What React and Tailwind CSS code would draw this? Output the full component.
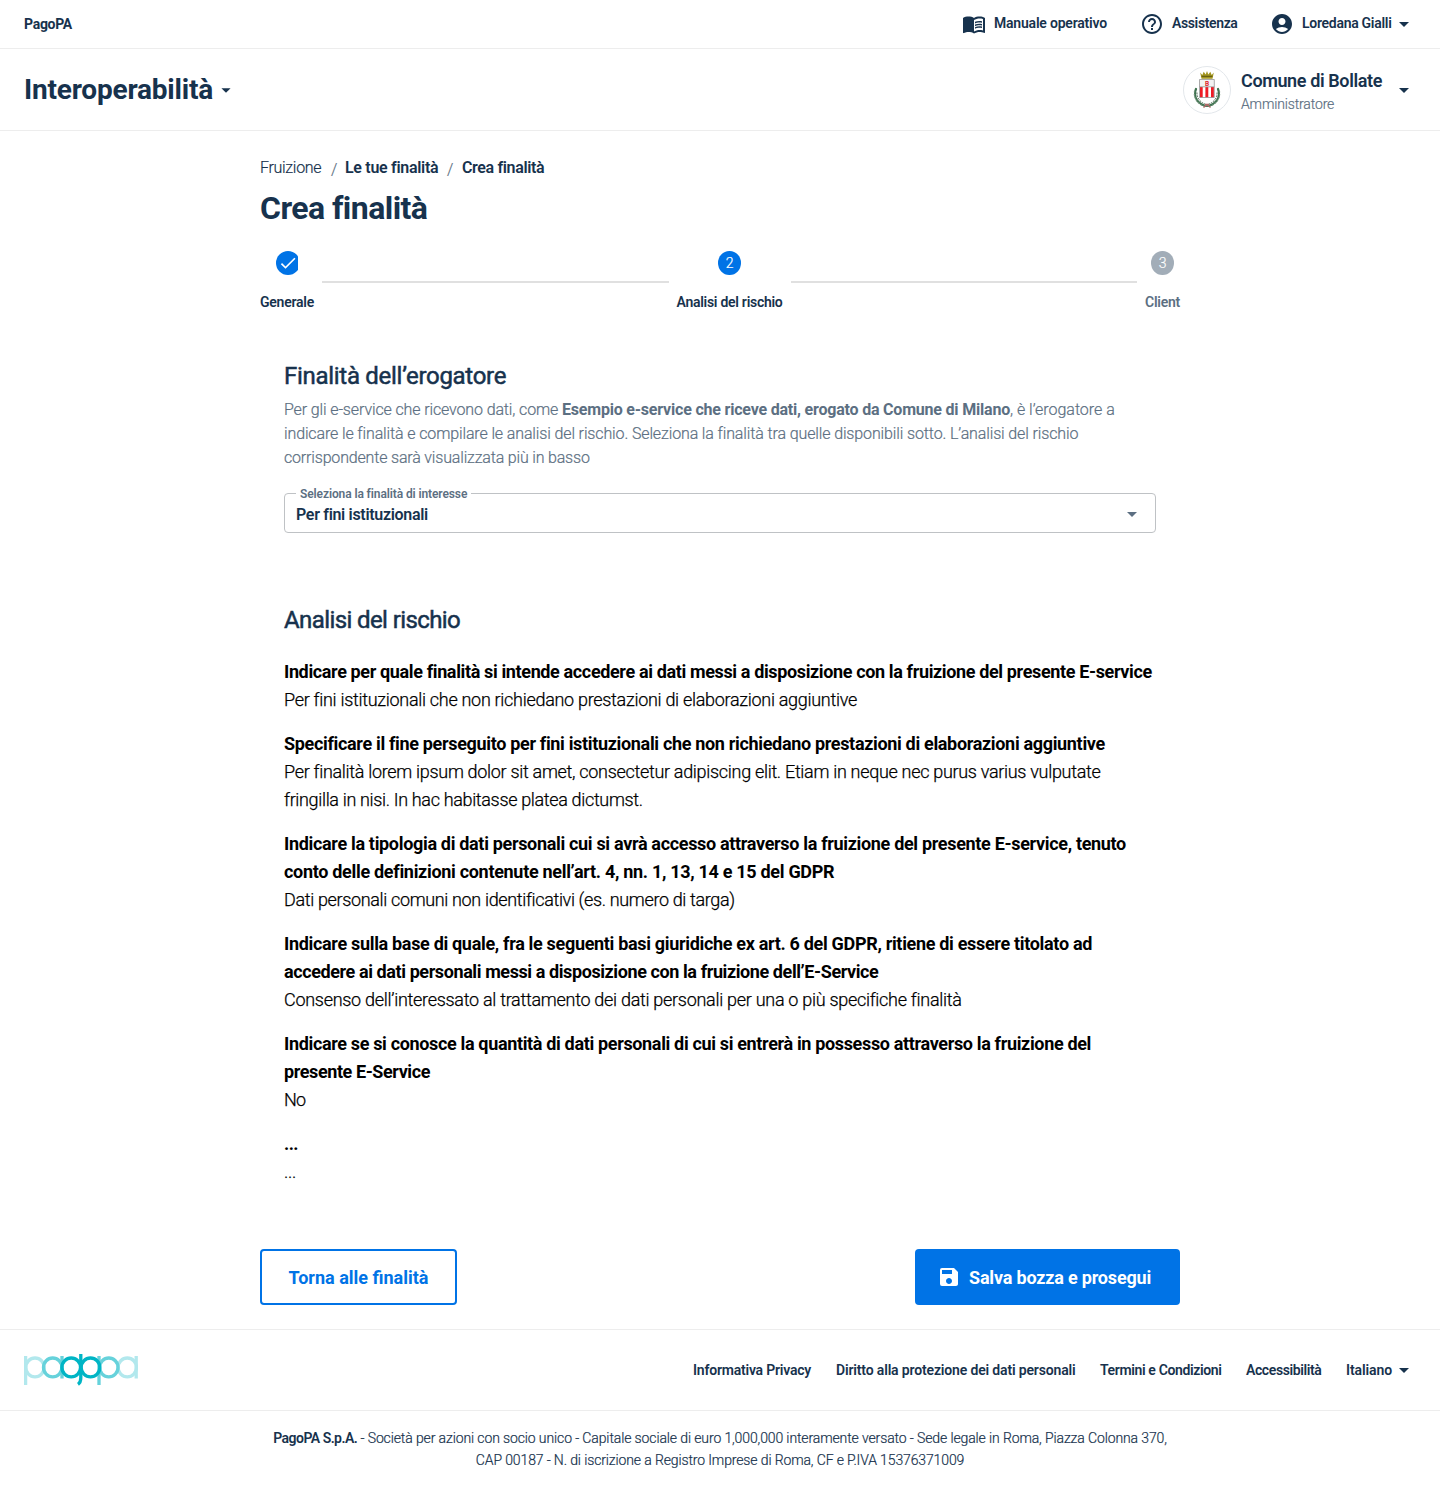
import { MdMenuBook, MdHelpOutline, MdAccountCircle, MdArrowDropDown, MdSave, MdCheck } from "react-icons/md";

const risk = [
  {
    q: [["Indicare per quale finalità si intende accedere ai dati messi a disposizione con la fruizione del presente E-service", "tracking-[-0.0203em]"]],
    a: [["Per fini istituzionali che non richiedano prestazioni di elaborazioni aggiuntive", "tracking-[-0.0165em]"]],
  },
  {
    q: [["Specificare il fine perseguito per fini istituzionali che non richiedano prestazioni di elaborazioni aggiuntive", "tracking-[-0.0183em]"]],
    a: [
      ["Per finalità lorem ipsum dolor sit amet, consectetur adipiscing elit. Etiam in neque nec purus varius vulputate", "tracking-[-0.017em]"],
      ["fringilla in nisi. In hac habitasse platea dictumst.", "tracking-[-0.019em]"],
    ],
  },
  {
    q: [
      ["Indicare la tipologia di dati personali cui si avrà accesso attraverso la fruizione del presente E-service, tenuto", "tracking-[-0.018em]"],
      ["conto delle definizioni contenute nell’art. 4, nn. 1, 13, 14 e 15 del GDPR", "tracking-[-0.017em]"],
    ],
    a: [["Dati personali comuni non identificativi (es. numero di targa)", "tracking-[-0.0195em]"]],
  },
  {
    q: [
      ["Indicare sulla base di quale, fra le seguenti basi giuridiche ex art. 6 del GDPR, ritiene di essere titolato ad", "tracking-[-0.0178em]"],
      ["accedere ai dati personali messi a disposizione con la fruizione dell’E-Service", "tracking-[-0.0226em]"],
    ],
    a: [["Consenso dell’interessato al trattamento dei dati personali per una o più specifiche finalità", "tracking-[-0.016em]"]],
  },
  {
    q: [
      ["Indicare se si conosce la quantità di dati personali di cui si entrerà in possesso attraverso la fruizione del", "tracking-[-0.0191em]"],
      ["presente E-Service", "tracking-[-0.0227em]"],
    ],
    a: [["No", "tracking-[-0.04em]"]],
  },
  { q: [["...", "tracking-[-0.03em]"]], a: [["...", "tracking-[-0.02em]"]] },
];

function Lines({ items }) {
  return items.map(([text, tracking]) => (
    <span key={text} className={`block whitespace-nowrap ${tracking}`}>{text}</span>
  ));
}

function Crest() {
  return (
    <svg viewBox="0 0 48 48" className="size-12" aria-hidden="true">
      <circle cx="24" cy="24" r="23.5" fill="#fff" stroke="#e3e7eb" />
      <g fill="none" strokeLinecap="round">
        <path d="M13 23c-3 8 2 15 10 17M35 23c3 8-2 15-10 17" stroke="#3f7350" strokeWidth="2.2" strokeDasharray="1.6 1.5" />
        <path d="M11.6 25c-1.5 7 3.5 14 11 15.5M36.4 25c1.5 7-3.5 14-11 15.5" stroke="#6f8f78" strokeWidth="1.2" strokeDasharray="1 2.2" />
        <path d="M14 27c0 5 3 9 8 11M34 27c0 5-3 9-8 11" stroke="#4a6350" strokeWidth="1" strokeDasharray="1 1.8" />
      </g>
      <path d="M20.5 41.5l3.5-3 3.5 3M22 38.5h4" fill="none" stroke="#b06a68" strokeWidth="1.4" />
      <path d="M17.2 6.5l2.1 2.4 1.4-3.1 2 2.6L24 5l1.3 3.4 2-2.6 1.4 3.1 2.1-2.4-1.3 6.2h-11z" fill="#a2951e" />
      <path d="M18.6 10.3h10.8" stroke="#59520f" strokeWidth="1" />
      <path d="M16.5 13.5h14.8v18H16.5z" fill="#f2f2f2" />
      <path d="M16.5 21h14.8v10.4H16.5z" fill="#fff" />
      <path d="M17 21h2.7v10.4H17zM22.4 21h2.9v10.4h-2.9zM28 21h2.9v10.4H28z" fill="#ee1c25" />
      <path d="M16.5 13.5h14.8v18H16.5zM16.5 20.8h14.8" fill="none" stroke="#969696" strokeWidth=".8" />
      <text x="24" y="19.7" textAnchor="middle" fill="#e0252c" className="font-[Roboto] text-[6.5px] font-bold">B</text>
    </svg>
  );
}

function PagoLogo() {
  return (
    <svg viewBox="0 0 114 34" className="h-[34px] w-[114px]" fill="none" strokeWidth="3.3" role="img" aria-label="pagopa">
      <g stroke="#b2e8ed">
        <ellipse cx="11" cy="14.4" rx="9.2" ry="9.4" />
        <ellipse cx="103.3" cy="14.4" rx="9.2" ry="9.4" />
        <path d="M1.6 3v29M112.2 3v22.500" />
      </g>
      <g stroke="#66d2db">
        <ellipse cx="28.7" cy="14.4" rx="9.2" ry="9.4" />
        <ellipse cx="84.8" cy="14.4" rx="9.2" ry="9.4" />
        <path d="M38 3v22.5M75 3v29" />
      </g>
      <g stroke="#00b5c5">
        <ellipse cx="47.2" cy="14.4" rx="9.3" ry="9.4" />
        <ellipse cx="66.5" cy="14.400" rx="9.3" ry="9.4" />
        <path d="M56.8 1v24c0 3.5-.8 5-2.8 6.300" />
      </g>
    </svg>
  );
}

function Step({ label, tracking, muted, children }) {
  return (
    <div className="flex flex-col items-center">
      <div className="flex h-6 items-center justify-center">{children}</div>
      <span className={`mt-[18px] text-sm leading-[18px] font-semibold whitespace-nowrap ${tracking} ${muted ? "text-[#5c6f82]" : ""}`}>{label}</span>
    </div>
  );
}

const Connector = () => <div className="mx-2 mt-[30px] h-0.5 flex-1 bg-[#e0e0e0]" />;

export default function App() {
  return (
    <div className="min-h-[1487px] bg-white font-[Roboto,sans-serif] text-[#17324d]">
      <header>
        <div className="flex h-[49px] items-center justify-between border-b border-[#ededed] px-6 text-sm font-semibold">
          <span className="font-bold tracking-[-0.0195em]">PagoPA</span>
          <nav className="flex items-center whitespace-nowrap">
            <a className="flex items-center">
              <MdMenuBook className="size-6" />
              <span className="-mt-0.5 ml-2 w-[114px] tracking-[-0.0143em]">Manuale operativo</span>
            </a>
            <a className="ml-8 flex items-center">
              <MdHelpOutline className="size-6" />
              <span className="-mt-0.5 ml-2 w-[66px] tracking-[-0.0267em]">Assistenza</span>
            </a>
            <a className="ml-8 flex items-center">
              <MdAccountCircle className="size-6" />
              <span className="-mt-0.5 ml-2 w-[90px] tracking-[-0.0203em]">Loredana Gialli</span>
              <MdArrowDropDown className="size-6" />
            </a>
          </nav>
        </div>
        <div className="flex h-[82px] items-center justify-between border-b border-[#ededed] px-6">
          <div className="flex items-center">
            <span className="text-[28px] leading-9 font-bold tracking-[-0.0072em]">Interoperabilità</span>
            <MdArrowDropDown className="ml-0.5 size-[22px]" />
          </div>
          <div className="flex items-center">
            <Crest />
            <div className="mt-1 ml-2.5 w-[151px] whitespace-nowrap">
              <div className="text-lg leading-6 font-semibold tracking-[-0.0212em]">Comune di Bollate</div>
              <div className="text-sm leading-[22px] font-light tracking-[-0.01em] text-[#5c6f82] [-webkit-text-stroke:0.2px]">Amministratore</div>
            </div>
            <MdArrowDropDown className="size-6" />
          </div>
        </div>
      </header>

      <main className="mx-auto h-[1198px] w-[920px] pt-[25px]">
        <nav className="flex h-6 items-center text-base font-semibold whitespace-nowrap">
          <span className="w-[62px] font-light tracking-[-0.019em] [-webkit-text-stroke:0.2px]">Fruizione</span>
          <span className="mt-1 w-[23px] pl-[9px] font-light text-[#5c6f82] [-webkit-text-stroke:0.2px]">/</span>
          <span className="w-[93px] tracking-[-0.0187em]">Le tue finalità</span>
          <span className="mt-1 w-6 pl-[9px] font-light text-[#5c6f82] [-webkit-text-stroke:0.2px]">/</span>
          <span className="tracking-[-0.0222em]">Crea finalità</span>
        </nav>
        <h1 className="mt-2 text-[32px] leading-10 font-bold tracking-[-0.0173em]">Crea finalità</h1>

        <div className="mt-[23px] flex items-start">
          <Step label="Generale" tracking="tracking-[-0.0171em]">
            <div className="w-[22px] overflow-hidden">
              <div className="flex size-6 items-center justify-center rounded-full bg-[#0073e6]">
                <MdCheck className="mr-px mb-px size-5 text-white" />
              </div>
            </div>
          </Step>
          <Connector />
          <Step label="Analisi del rischio" tracking="tracking-[-0.0195em]">
            <div className="flex h-6 w-[22.5px] items-center justify-center rounded-[50%] bg-[#0073e6] text-sm font-light text-white [-webkit-text-stroke:0.2px]">2</div>
          </Step>
          <Connector />
          <Step label="Client" tracking="tracking-[-0.0177em]" muted>
            <div className="flex h-6 w-[22.5px] items-center justify-center rounded-[50%] bg-[#a2adb8] text-sm font-light text-white [-webkit-text-stroke:0.2px]">3</div>
          </Step>
        </div>

        <section className="mt-[49px] px-6">
          <h2 className="text-2xl leading-8 font-normal tracking-[-0.012em] [-webkit-text-stroke:0.5px]">Finalità dell’erogatore</h2>
          <p className="mt-1.5 text-base leading-6 font-light whitespace-nowrap text-[#5c6f82]">
            <span className="block [-webkit-text-stroke:0.2px]">
              <span className="tracking-[-0.008em]">Per gli e-service che ricevono dati, come </span>
              <b className="font-bold tracking-[-0.0127em] [-webkit-text-stroke:0]">Esempio e-service che riceve dati, erogato da Comune di Milano</b>
              <span className="tracking-[-0.001em]">, è l’erogatore a</span>
            </span>
            <span className="block tracking-[-0.008em] [-webkit-text-stroke:0.2px]">indicare le finalità e compilare le analisi del rischio. Seleziona la finalità tra quelle disponibili sotto. L’analisi del rischio</span>
            <span className="block tracking-[-0.011em] [-webkit-text-stroke:0.2px]">corrispondente sarà visualizzata più in basso</span>
          </p>
          <div className="relative mt-[23px] flex h-10 items-center justify-between rounded border border-[#bfc2c5] px-[11px]">
            <span className="absolute -top-2 left-[11px] w-[175px] bg-white pl-1 text-xs leading-4 font-semibold tracking-[-0.0089em] whitespace-nowrap text-[#5c6f82]">Seleziona la finalità di interesse</span>
            <span className="mt-1 text-base font-semibold tracking-[-0.0195em]">Per fini istituzionali</span>
            <MdArrowDropDown className="mt-0.5 size-6 text-[#5c6f82]" />
          </div>
        </section>

        <section className="mt-[71px] px-6">
          <h2 className="text-2xl leading-8 font-normal tracking-[-0.025em] [-webkit-text-stroke:0.5px]">Analisi del rischio</h2>
          <dl className="mt-[22px] flex flex-col gap-4 text-lg leading-7 text-black">
            {risk.map(({ q, a }) => (
              <div key={q[0][0]}>
                <dt className="font-bold"><Lines items={q} /></dt>
                <dd className="font-light [-webkit-text-stroke:0.25px]"><Lines items={a} /></dd>
              </div>
            ))}
          </dl>
        </section>

        <div className="mt-[63px] flex justify-between text-lg font-bold">
          <button className="h-14 w-[197px] rounded border-2 border-[#0073e6] pt-0.5 text-[#0073e6]">Torna alle finalità</button>
          <button className="flex h-14 w-[265px] items-center rounded bg-[#0073e6] pl-[22px] text-white">
            <MdSave className="size-6" />
            <span className="mt-0.5 ml-2 tracking-[-0.0102em]">Salva bozza e prosegui</span>
          </button>
        </div>
      </main>

      <footer>
        <div className="flex h-[82px] items-center justify-between border-y border-[#ededed] px-6">
          <PagoLogo />
          <nav className="flex items-center text-sm font-semibold whitespace-nowrap">
            <a className="w-[143px] tracking-[-0.0152em]">Informativa Privacy</a>
            <a className="w-[264px] tracking-[-0.0113em]">Diritto alla protezione dei dati personali</a>
            <a className="w-[146px] tracking-[-0.0261em]">Termini e Condizioni</a>
            <a className="w-[100px] tracking-[-0.0276em]">Accessibilità</a>
            <a className="flex w-[70px] items-center justify-between tracking-[-0.007em]">
              Italiano
              <MdArrowDropDown className="size-6" />
            </a>
          </nav>
        </div>
        <p className="pt-4 text-center text-sm leading-[22px] font-light whitespace-nowrap">
          <span className="block [-webkit-text-stroke:0.2px]">
            <b className="font-semibold tracking-[-0.037em] [-webkit-text-stroke:0]">PagoPA S.p.A.</b>
            <span className="tracking-[-0.0085em]"> - Società per azioni con socio unico - Capitale sociale di euro 1,000,000 interamente versato - Sede legale in Roma, Piazza Colonna 370,</span>
          </span>
          <span className="block tracking-[-0.009em] [-webkit-text-stroke:0.2px]">CAP 00187 - N. di iscrizione a Registro Imprese di Roma, CF e P.IVA 15376371009</span>
        </p>
      </footer>
    </div>
  );
}
